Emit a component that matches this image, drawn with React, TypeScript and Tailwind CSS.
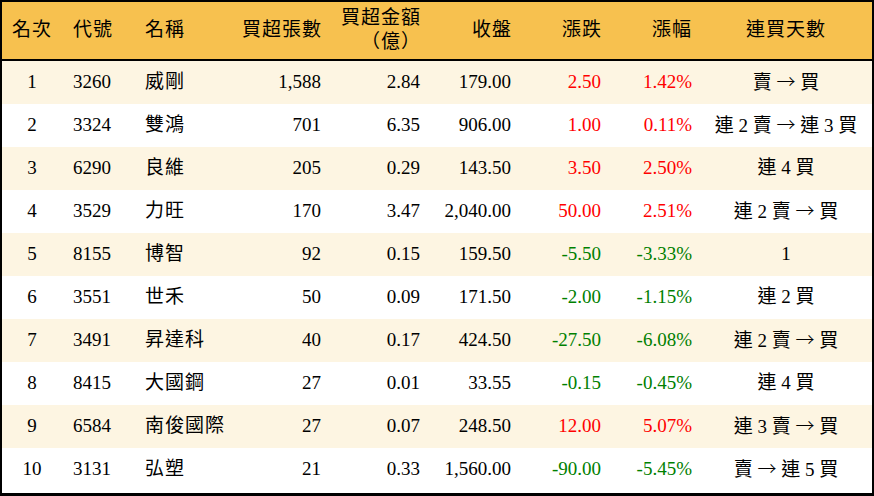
const rows = [
  { rank: "1", code: "3260", name: "威剛", vol: "1,588", amt: "2.84", close: "179.00", chg: "2.50", pct: "1.42%", streak: "賣 → 買" },
  { rank: "2", code: "3324", name: "雙鴻", vol: "701", amt: "6.35", close: "906.00", chg: "1.00", pct: "0.11%", streak: "連 2 賣 → 連 3 買" },
  { rank: "3", code: "6290", name: "良維", vol: "205", amt: "0.29", close: "143.50", chg: "3.50", pct: "2.50%", streak: "連 4 買" },
  { rank: "4", code: "3529", name: "力旺", vol: "170", amt: "3.47", close: "2,040.00", chg: "50.00", pct: "2.51%", streak: "連 2 賣 → 買" },
  { rank: "5", code: "8155", name: "博智", vol: "92", amt: "0.15", close: "159.50", chg: "-5.50", pct: "-3.33%", streak: "1" },
  { rank: "6", code: "3551", name: "世禾", vol: "50", amt: "0.09", close: "171.50", chg: "-2.00", pct: "-1.15%", streak: "連 2 買" },
  { rank: "7", code: "3491", name: "昇達科", vol: "40", amt: "0.17", close: "424.50", chg: "-27.50", pct: "-6.08%", streak: "連 2 賣 → 買" },
  { rank: "8", code: "8415", name: "大國鋼", vol: "27", amt: "0.01", close: "33.55", chg: "-0.15", pct: "-0.45%", streak: "連 4 買" },
  { rank: "9", code: "6584", name: "南俊國際", vol: "27", amt: "0.07", close: "248.50", chg: "12.00", pct: "5.07%", streak: "連 3 賣 → 買" },
  { rank: "10", code: "3131", name: "弘塑", vol: "21", amt: "0.33", close: "1,560.00", chg: "-90.00", pct: "-5.45%", streak: "賣 → 連 5 買" },
];

const cols = "grid grid-cols-[60px_73px_95px_100px_100px_90px_90px_90px_172px]";

// the arrow comes from the CJK font so it gets the full-width glyph
function Streak({ text }: { text: string }) {
  const parts = text.split("→");
  return (
    <div className="text-center whitespace-pre">
      {parts.map((p, i) => (
        <span key={i}>
          {i > 0 && <span style={{ fontFamily: '"Noto Sans CJK TC", sans-serif' }} className="font-light">→</span>}
          {p}
        </span>
      ))}
    </div>
  );
}

export default function App() {
  return (
    <div
      className="w-[874px] h-[496px] overflow-hidden bg-white border-l-2 border-r-2 border-t-2 border-b-[3px] border-black text-[19px] text-black"
      style={{ fontFamily: '"Liberation Serif", "Noto Sans CJK TC", serif' }}
    >
      <div className={`${cols} h-[59px] items-center bg-[#f7c14f] border-b-2 border-black tracking-[1px]`}>
        <div className="text-center">名次</div>
        <div className="pl-[11px]">代號</div>
        <div className="pl-[10px]">名稱</div>
        <div className="text-right pr-[8px]">買超張數</div>
        <div className="text-right pr-[9px] leading-[24px] -mt-[2px]">
          <div>買超金額</div>
          <div>（億）</div>
        </div>
        <div className="text-right pr-[8px]">收盤</div>
        <div className="text-right pr-[8px]">漲跌</div>
        <div className="text-right pr-[8px]">漲幅</div>
        <div className="text-center">連買天數</div>
      </div>
      {rows.map((r, i) => {
        const color = r.chg.startsWith("-") ? "text-[#008000]" : "text-[#ff0000]";
        return (
          <div
            key={r.rank}
            className={`${cols} h-[43px] items-center ${i % 2 === 0 ? "bg-[#fdf5e2]" : "bg-white"}`}
          >
            <div className="text-center">{r.rank}</div>
            <div className="pl-[11px]">{r.code}</div>
            <div className="pl-[10px] tracking-[1px]">{r.name}</div>
            <div className="text-right pr-[9px]">{r.vol}</div>
            <div className="text-right pr-[10px]">{r.amt}</div>
            <div className="text-right pr-[9px]">{r.close}</div>
            <div className={`text-right pr-[9px] ${color}`}>{r.chg}</div>
            <div className={`text-right pr-[8px] ${color}`}>{r.pct}</div>
            <Streak text={r.streak} />
          </div>
        );
      })}
    </div>
  );
}
